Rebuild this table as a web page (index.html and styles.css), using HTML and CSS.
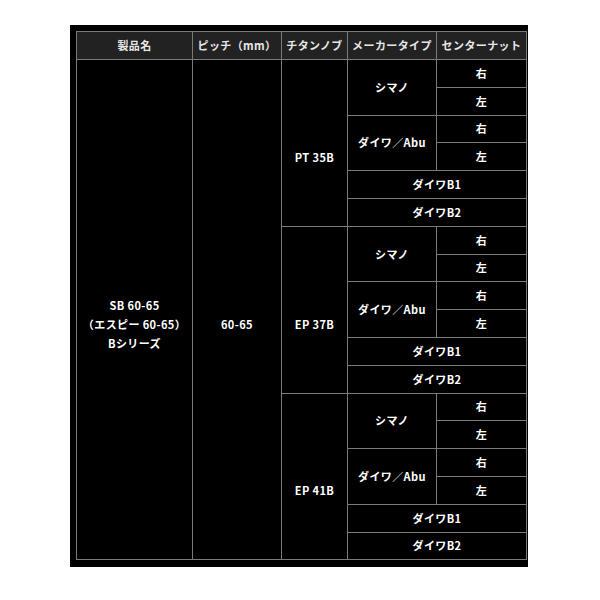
FILE: index.html
```html
<!DOCTYPE html>
<html lang="ja">
<head>
<meta charset="utf-8">
<link rel="stylesheet" href="styles.css">
</head>
<body>
<div class="frame">
<table class="spec">
<colgroup>
<col class="c1"><col class="c2"><col class="c3"><col class="c4"><col class="c5">
</colgroup>
<thead>
<tr><th>製品名</th><th>ピッチ（mm）</th><th>チタンノブ</th><th>メーカータイプ</th><th>センターナット</th></tr>
</thead>
<tbody>
<tr><td rowspan="18" class="shift">SB 60-65<br>（エスピー 60-65）<br>Bシリーズ</td><td rowspan="18" class="shift">60-65</td><td rowspan="6" class="shift">PT 35B</td><td rowspan="2">シマノ</td><td>右</td></tr>
<tr><td>左</td></tr>
<tr><td rowspan="2">ダイワ／Abu</td><td>右</td></tr>
<tr><td>左</td></tr>
<tr><td colspan="2">ダイワB1</td></tr>
<tr><td colspan="2">ダイワB2</td></tr>
<tr><td rowspan="6" class="shift">EP 37B</td><td rowspan="2">シマノ</td><td>右</td></tr>
<tr><td>左</td></tr>
<tr><td rowspan="2">ダイワ／Abu</td><td>右</td></tr>
<tr><td>左</td></tr>
<tr><td colspan="2">ダイワB1</td></tr>
<tr><td colspan="2">ダイワB2</td></tr>
<tr><td rowspan="6" class="shift">EP 41B</td><td rowspan="2">シマノ</td><td>右</td></tr>
<tr><td>左</td></tr>
<tr><td rowspan="2">ダイワ／Abu</td><td>右</td></tr>
<tr><td>左</td></tr>
<tr><td colspan="2">ダイワB1</td></tr>
<tr><td colspan="2">ダイワB2</td></tr>
</tbody>
</table>
</div>
</body>
</html>
```
FILE: styles.css
```css
html, body {
  margin: 0;
  padding: 0;
  background: #ffffff;
}
.frame {
  margin: 25px 0 0 70px;
  width: 449px;
  height: 528px;
  padding: 6px 3px 8px 6px;
  background: #000000;
}
.spec {
  border-collapse: collapse;
  table-layout: fixed;
  width: 450px;
  font-family: "Noto Sans CJK JP", "Noto Sans", sans-serif;
  font-size: 11px;
  font-weight: 700;
  letter-spacing: 0.4px;
  color: #ffffff;
}
.c1 { width: 116px; }
.c2 { width: 89px; }
.c3 { width: 66px; }
.c4 { width: 89px; }
.c5 { width: 90px; }
.spec th, .spec td {
  border: 1px solid #7a7a7a;
  text-align: center;
  vertical-align: middle;
  padding: 0;
  line-height: 19px;
}
.spec th {
  background: #222222;
  color: #e6e6e6;
  height: 27px;
}
.spec tbody tr {
  height: 27.8px;
}
.spec td.shift {
  padding-top: 29px;
}
```
